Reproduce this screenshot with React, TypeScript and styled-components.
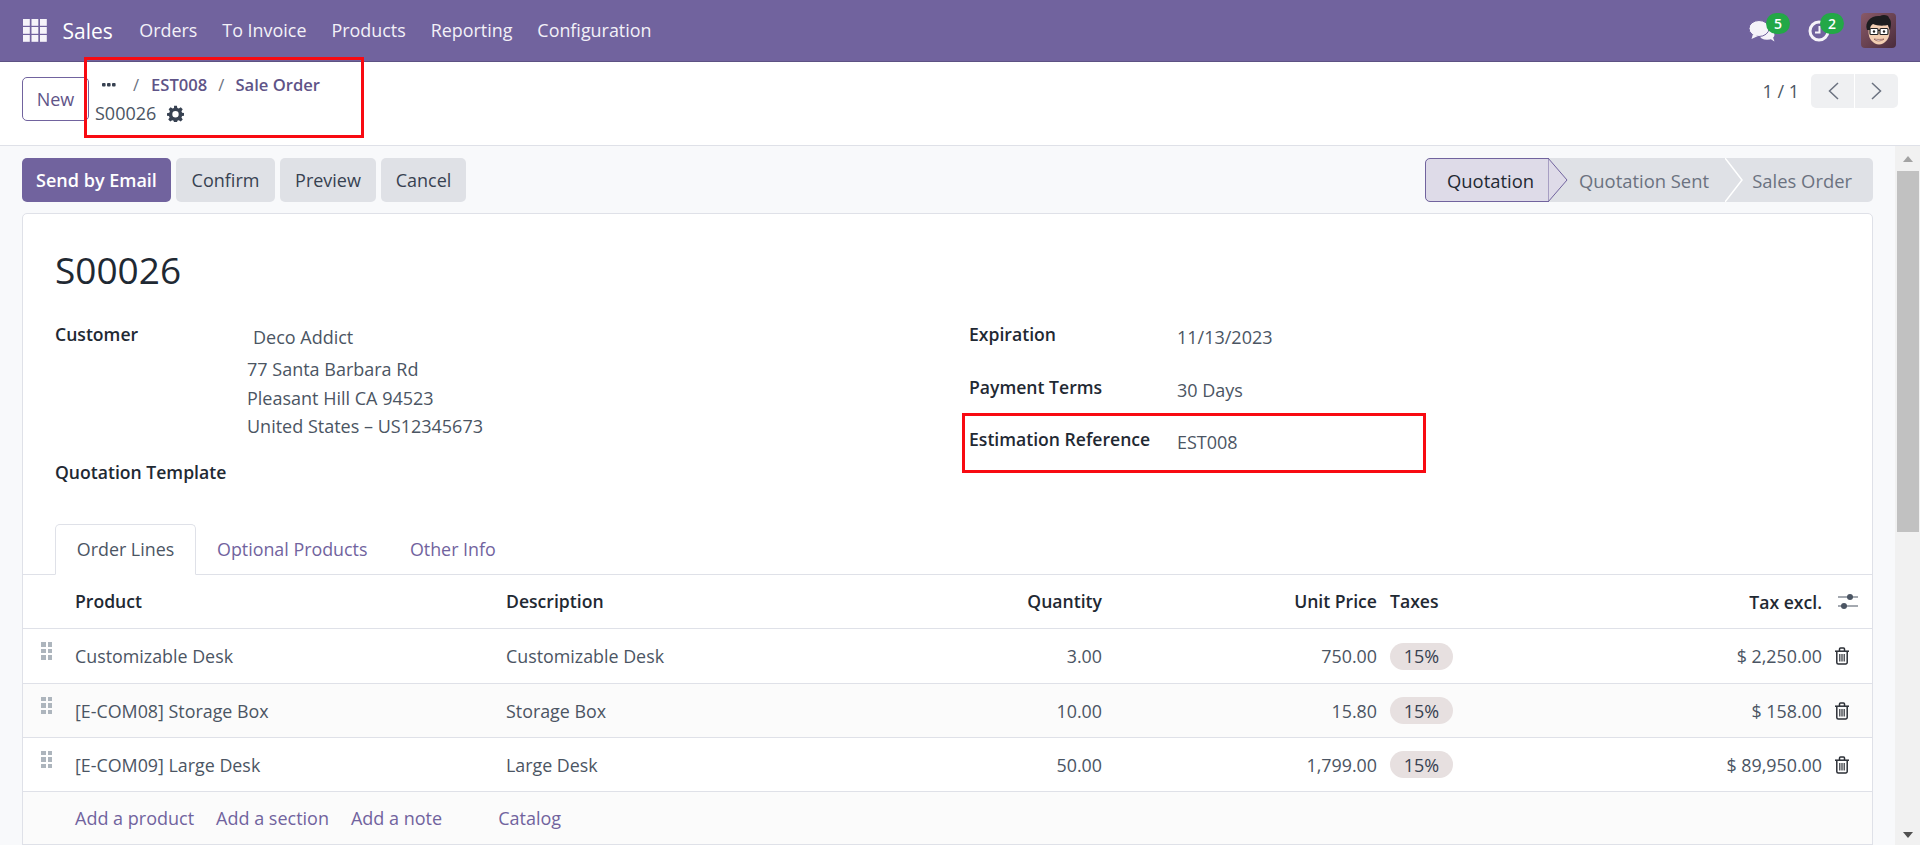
import React from "react";
import styled, { createGlobalStyle } from "styled-components";

const PURPLE = "#71639e";
const CRUMB = "#5f5488";
const INK = "#374151";
const FONT = `"Open Sans", "Noto Sans", "Liberation Sans", sans-serif`;

const Global = createGlobalStyle`
  html, body { margin: 0; padding: 0; height: 100%; overflow: hidden; background: #fff; }
  #root { height: 100%; }
  * { box-sizing: border-box; }
  body { font-family: ${FONT}; font-size: 18px; color: ${INK}; }
`;

const Page = styled.div`
  position: relative;
  width: 1920px;
  height: 845px;
  display: flex;
  flex-direction: column;
  overflow: hidden;
`;

const NavBar = styled.header`
  flex: 0 0 62px;
  display: flex;
  align-items: center;
  background: ${PURPLE};
  border-bottom: 1px solid #5d5283;
  padding: 0 24px 0 23px;
  color: #fff;
`;

const Brand = styled.span`
  font-size: 21px;
  margin-left: 15.5px;
  margin-right: 26.5px;
`;

const MenuItem = styled.span`
  font-size: 17.9px;
  color: #f3f1f8;
  margin-right: 25px;
  margin-top: -1px;
`;

const NavRight = styled.div`
  margin-left: auto;
  display: flex;
  align-items: center;
`;

const IconWithBadge = styled.span<{ $gap: number }>`
  position: relative;
  display: inline-flex;
  width: 26px;
  height: 22px;
  margin-right: ${(p) => p.$gap}px;
`;

const NavBadge = styled.span<{ $left: number }>`
  position: absolute;
  top: -7px;
  left: ${(p) => p.$left}px;
  width: 24px;
  height: 21px;
  border-radius: 11px;
  background: #23a847;
  color: #fff;
  font-size: 14px;
  font-weight: 600;
  display: flex;
  align-items: center;
  justify-content: center;
`;

const ControlPanel = styled.div`
  flex: 0 0 84px;
  display: flex;
  background: #fff;
  border-bottom: 1px solid #dfe1e8;
  padding: 15px 22px 0 22px;
`;

const NewButton = styled.button`
  width: 67px;
  height: 44px;
  background: #fff;
  border: 1px solid ${PURPLE};
  border-radius: 5px;
  color: ${CRUMB};
  font: 500 18px ${FONT};
  padding: 0;
`;

const Crumbs = styled.div`
  margin-left: 6px;
  display: flex;
  flex-direction: column;
`;

const CrumbRow = styled.div`
  display: flex;
  align-items: center;
  height: 29px;
  margin-top: -7px;
  font-size: 16.6px;
  font-weight: 600;
  color: ${CRUMB};
`;

const Dots = styled.span`
  margin-left: 7px;
  width: 14px;
  display: inline-flex;
`;

const Slash = styled.span<{ $left: number; $right: number }>`
  color: #6b7280;
  font-weight: 400;
  margin: 0 ${(p) => p.$right}px 0 ${(p) => p.$left}px;
`;

const Current = styled.div`
  display: flex;
  align-items: center;
  height: 28px;
  font-size: 18px;
  color: #4b5563;
  gap: 11px;
`;

const Pager = styled.div`
  margin-left: auto;
  display: flex;
  align-items: flex-start;
  margin-top: -3px;
`;

const PagerText = styled.span`
  font-size: 18px;
  line-height: 34px;
  margin-right: 12px;
  color: #4b5563;
`;

const PagerButton = styled.span<{ $side: "l" | "r" }>`
  width: 43px;
  height: 34px;
  background: #eff0f2;
  display: flex;
  align-items: center;
  justify-content: center;
  border-radius: ${(p) => (p.$side === "l" ? "5px 0 0 5px" : "0 5px 5px 0")};
  margin-left: ${(p) => (p.$side === "r" ? "1px" : "0")};
`;

const Body = styled.div`
  flex: 1;
  min-height: 0;
  display: flex;
`;

const Content = styled.main`
  flex: 1;
  min-width: 0;
  background: #f8f9fb;
  padding: 12px 22px 0 22px;
  overflow: hidden;
`;

const ActionBar = styled.div`
  display: flex;
  align-items: stretch;
  height: 44px;
`;

const ActionButton = styled.button<{ $primary?: boolean; $w: number }>`
  width: ${(p) => p.$w}px;
  border: none;
  border-radius: 5px;
  padding: 0;
  margin-right: 5px;
  background: ${(p) => (p.$primary ? PURPLE : "#dfe1e6")};
  color: ${(p) => (p.$primary ? "#fff" : INK)};
  font: ${(p) => (p.$primary ? 600 : 500)} 18px ${FONT};
`;

const StatusBar = styled.div`
  margin-left: auto;
  width: 448px;
  display: flex;
  position: relative;
  background: #dfe1e6;
  border-radius: 5px;
`;

const StatusCurrent = styled.div`
  width: 124px;
  background: #dedbe8;
  border: 1px solid ${PURPLE};
  border-radius: 5px 0 0 5px;
  color: #1f2933;
  font-weight: 500;
  font-size: 18.4px;
  display: flex;
  align-items: center;
  justify-content: flex-end;
  padding-right: 14px;
`;

const StatusStep = styled.div<{ $w: number }>`
  width: ${(p) => p.$w}px;
  color: #6b7280;
  font-weight: 500;
  font-size: 18.4px;
  display: flex;
  align-items: center;
  justify-content: flex-end;
`;

const StatusArrow = styled.svg<{ $x: number }>`
  position: absolute;
  left: ${(p) => p.$x}px;
  top: 0;
  width: 20px;
  height: 44px;
`;

const Sheet = styled.section`
  margin-top: 11px;
  background: #fff;
  border: 1px solid #dfe1e8;
  border-radius: 5px;
  height: 661px;
`;

const Title = styled.h1`
  margin: 0;
  padding: 31px 0 0 32px;
  height: 108px;
  font-size: 37px;
  line-height: 50px;
  font-weight: 500;
  color: #1f2933;
`;

const Columns = styled.div`
  display: grid;
  grid-template-columns: 914px 1fr;
  height: 202px;
`;

const FormColumn = styled.div`
  display: flex;
  flex-direction: column;
`;

const Field = styled.div<{ $h: number }>`
  display: flex;
  height: ${(p) => p.$h}px;
  padding-left: 32px;
`;

const Label = styled.span`
  width: 208px;
  flex: none;
  font-weight: 600;
  color: #1f2933;
  font-size: 17.6px;
  line-height: 24px;
`;

const Value = styled.span`
  color: #4b5563;
  font-size: 18px;
  line-height: 24px;
  padding-top: 3px;
`;

const Address = styled.div`
  color: #4b5563;
  font-size: 18px;
  line-height: 28.8px;
  margin-left: -16px;
  margin-top: 1px;
`;

const AddressName = styled.div`
  padding-left: 6px;
  margin-bottom: 3px;
`;

const Tabs = styled.nav`
  display: flex;
  height: 51px;
  padding-left: 32px;
  border-bottom: 1px solid #dfe1e8;
`;

const Tab = styled.span<{ $active?: boolean }>`
  width: ${(p) => (p.$active ? "141px" : "auto")};
  height: 51px;
  display: flex;
  align-items: center;
  justify-content: center;
  padding: ${(p) => (p.$active ? "0 0 2px" : "0 21.5px 2px 21px")};
  font-size: 17.85px;
  color: ${(p) => (p.$active ? "#4b5563" : PURPLE)};
  background: ${(p) => (p.$active ? "#fff" : "transparent")};
  border: ${(p) => (p.$active ? "1px solid #dfe1e8" : "none")};
  border-bottom: ${(p) => (p.$active ? "1px solid #fff" : "none")};
  border-radius: 5px 5px 0 0;
`;

const Row = styled.div<{ $h: number; $shade?: boolean }>`
  display: grid;
  grid-template-columns: 52px 431px 400px 196px 275px 13px 1fr;
  align-items: center;
  height: ${(p) => p.$h}px;
  background: ${(p) => (p.$shade ? "#fbfbfb" : "#fff")};
  border-bottom: 1px solid #dfe1e8;
  font-size: 17.85px;
  color: #4b5563;
`;

const HeadCell = styled.span<{ $right?: boolean }>`
  font-weight: 600;
  font-size: 17.6px;
  color: #1f2933;
  white-space: nowrap;
  padding-bottom: 2px;
  text-align: ${(p) => (p.$right ? "right" : "left")};
`;

const Cell = styled.span<{ $right?: boolean }>`
  text-align: ${(p) => (p.$right ? "right" : "left")};
  white-space: nowrap;
`;

const Handle = styled.span`
  display: grid;
  grid-template-columns: 4.5px 4.5px;
  grid-auto-rows: 4.5px;
  gap: 2px;
  justify-content: center;
  margin-left: -5px;
  margin-top: -10px;
  & > i { background: #adb5bd; display: block; }
`;

const TaxBadge = styled.span`
  display: inline-flex;
  align-items: center;
  justify-content: center;
  width: 63px;
  height: 27px;
  border-radius: 14px;
  background: #e7e0e0;
  color: #374151;
  font-size: 18px;
`;

const LastCell = styled.div`
  display: flex;
  align-items: center;
`;

const Amount = styled.span`
  margin-left: auto;
  white-space: nowrap;
`;

const IconSlot = styled.span<{ $pad: number }>`
  width: 50px;
  padding-right: ${(p) => p.$pad}px;
  display: flex;
  justify-content: flex-end;
`;

const AddLine = styled.span`
  grid-column: 1 / -1;
  display: flex;
  padding-left: 52px;
  color: ${PURPLE};
  font-size: 18px;
  white-space: nowrap;
`;

const AddLink = styled.span<{ $gap: number }>`
  margin-right: ${(p) => p.$gap}px;
`;

const ScrollTrack = styled.aside`
  flex: 0 0 25px;
  background: #f1f1f1;
  display: flex;
  flex-direction: column;
  align-items: center;
  justify-content: space-between;
  padding: 10px 0 7px;
  position: relative;
`;

const ScrollThumb = styled.div`
  position: absolute;
  left: 2px;
  right: 1px;
  top: 25px;
  height: 361px;
  background: #c1c1c1;
`;

const Caret = styled.span<{ $up?: boolean }>`
  width: 0;
  height: 0;
  border-left: 5px solid transparent;
  border-right: 5px solid transparent;
  ${(p) => (p.$up ? "border-bottom: 6px solid #a3a3a3;" : "border-top: 6px solid #505050;")}
`;

const Annotation = styled.div<{ $x: number; $y: number; $w: number; $h: number }>`
  position: absolute;
  left: ${(p) => p.$x}px;
  top: ${(p) => p.$y}px;
  width: ${(p) => p.$w}px;
  height: ${(p) => p.$h}px;
  border: 3px solid #f80a12;
  pointer-events: none;
`;

const GridIcon = () => (
  <svg width="24" height="23" viewBox="0 0 24 23" fill="#f5f3f9">
    {[0, 8.5, 17].map((x) =>
      [0, 8, 16].map((y) => <rect key={`${x}-${y}`} x={x} y={y} width="6.8" height="6.8" />)
    )}
  </svg>
);

const ChatIcon = () => (
  <svg width="26" height="22" viewBox="0 0 26 22" fill="#f5f3f9">
    <ellipse cx="18" cy="15" rx="7.5" ry="4.8" />
    <path d="M20 18 L25.500 21.500 L23.500 16z" />
    <ellipse cx="10" cy="8.500" rx="10" ry="8" stroke="#71639e" strokeWidth="1" />
    <path d="M4 14 L2.500 19 L9 16z" />
  </svg>
);

const ClockIcon = () => (
  <svg width="26" height="22" viewBox="0 0 26 22" fill="none" stroke="#f5f3f9">
    <circle cx="12" cy="11" r="9" strokeWidth="3" />
    <path d="M12.500 6v6.500H8" strokeWidth="2" />
  </svg>
);

const Avatar = () => (
  <svg width="35" height="35" viewBox="0 0 35 35">
    <defs>
      <linearGradient id="avbg" x1="0" y1="0" x2="1" y2="1">
        <stop offset="0" stopColor="#8a5a68" />
        <stop offset="1" stopColor="#4a2c3c" />
      </linearGradient>
    </defs>
    <rect width="35" height="35" rx="4" fill="url(#avbg)" />
    <ellipse cx="18" cy="19" rx="10.500" ry="12.500" fill="#f3cfb3" />
    <path d="M6 17C3 8 11 2 19 3c3-2 9-1 9 2 3 3 2 8 1 12l-2-5c-4 1-11 1-15-1-2 1-3 3-3 6z" fill="#1d1d1f" />
    <rect x="9" y="15.500" width="8" height="6" rx="1" fill="#fff" stroke="#222" strokeWidth="1.200" />
    <rect x="19" y="15.500" width="8" height="6" rx="1" fill="#fff" stroke="#222" strokeWidth="1.200" />
    <path d="M17 17.500h2" stroke="#222" strokeWidth="1" />
    <circle cx="13" cy="18.500" r="1.200" fill="#222" />
    <circle cx="23" cy="18.500" r="1.200" fill="#222" />
    <path d="M13 26c2 2.500 7 2.500 10 0-2 .6-7 .6-10 0z" fill="#fff" stroke="#7a3b30" strokeWidth=".6" />
  </svg>
);

const Gear = () => (
  <svg width="17" height="17" viewBox="0 0 24 24">
    <path
      fill="#374151"
      fillRule="evenodd"
      d="M10 1h4l.6 3.200 2.100.9 2.700-1.800 2.800 2.800-1.800 2.700.9 2.100 3.200.6v3.500l-3.200.6-.9 2.100 1.800 2.700-2.800 2.800-2.700-1.800-2.100.9-.6 3.200h-4l-.6-3.200-2.100-.9-2.700 1.800-2.800-2.800 1.800-2.700-.9-2.100L0 15v-3.500l3.200-.6.9-2.100-1.800-2.700 2.800-2.800 2.700 1.800 2.100-.9zM12 8.500a4.500 4.500 0 1 0 0 9 4.500 4.500 0 0 0 0-9z"
    />
  </svg>
);

const Chevron = ({ left }: { left?: boolean }) => (
  <svg width="12" height="18" viewBox="0 0 12 18" fill="none" stroke="#6b7280" strokeWidth="1.500">
    <path d={left ? "M11 1 2.500 9l8.500 8" : "M1 1l8.500 8L1 17"} />
  </svg>
);

const Sliders = () => (
  <svg width="20" height="17" viewBox="0 0 20 17" fill="#4b5563" stroke="#4b5563">
    <path d="M0 4h20M0 13h20" strokeWidth="1.200" />
    <circle cx="12" cy="4" r="3" stroke="none" />
    <circle cx="6" cy="13" r="3" stroke="none" />
  </svg>
);

const Trash = () => (
  <svg width="16" height="18" viewBox="0 0 16 18" fill="none" stroke="#2b2f36" strokeWidth="1.500">
    <path d="M1 4.200h14" />
    <path d="M5.500 4V2a1 1 0 0 1 1-1h3a1 1 0 0 1 1 1v2" />
    <path d="M2.800 4.500v11a1.500 1.500 0 0 0 1.500 1.500h7.400a1.500 1.500 0 0 0 1.500-1.500v-11" />
    <path d="M5.800 7v7.500M8 7v7.500M10.200 7v7.500" strokeWidth="1.200" />
  </svg>
);

const DotsIcon = () => (
  <svg width="14" height="6" viewBox="0 0 14 6" fill="#374151">
    <rect x="0" y="1" width="3.600" height="3.600" rx="1" />
    <rect x="5" y="1" width="3.600" height="3.600" rx="1" />
    <rect x="10" y="1" width="3.600" height="3.600" rx="1" />
  </svg>
);

const lines = [
  { p: "Customizable Desk", d: "Customizable Desk", q: "3.00", u: "750.00", t: "$ 2,250.00", h: 55 },
  { p: "[E-COM08] Storage Box", d: "Storage Box", q: "10.00", u: "15.80", t: "$ 158.00", h: 54 },
  { p: "[E-COM09] Large Desk", d: "Large Desk", q: "50.00", u: "1,799.00", t: "$ 89,950.00", h: 54 },
];

export default function App() {
  return (
    <Page>
      <Global />
      <NavBar>
        <GridIcon />
        <Brand>Sales</Brand>
        <MenuItem>Orders</MenuItem>
        <MenuItem>To Invoice</MenuItem>
        <MenuItem>Products</MenuItem>
        <MenuItem>Reporting</MenuItem>
        <MenuItem>Configuration</MenuItem>
        <NavRight>
          <IconWithBadge $gap={32}>
            <ChatIcon />
            <NavBadge $left={17}>5</NavBadge>
          </IconWithBadge>
          <IconWithBadge $gap={28}>
            <ClockIcon />
            <NavBadge $left={13}>2</NavBadge>
          </IconWithBadge>
          <Avatar />
        </NavRight>
      </NavBar>
      <ControlPanel>
        <NewButton>New</NewButton>
        <Crumbs>
          <CrumbRow>
            <Dots>
              <DotsIcon />
            </Dots>
            <Slash $left={17} $right={12}>/</Slash>
            <span>EST008</span>
            <Slash $left={11} $right={11}>/</Slash>
            <span>Sale Order</span>
          </CrumbRow>
          <Current>
            S00026
            <Gear />
          </Current>
        </Crumbs>
        <Pager>
          <PagerText>1 / 1</PagerText>
          <PagerButton $side="l">
            <Chevron left />
          </PagerButton>
          <PagerButton $side="r">
            <Chevron />
          </PagerButton>
        </Pager>
      </ControlPanel>
      <Body>
        <Content>
          <ActionBar>
            <ActionButton $primary $w={149}>Send by Email</ActionButton>
            <ActionButton $w={99}>Confirm</ActionButton>
            <ActionButton $w={96}>Preview</ActionButton>
            <ActionButton $w={85}>Cancel</ActionButton>
            <StatusBar>
              <StatusCurrent>Quotation</StatusCurrent>
              <StatusStep $w={160}>Quotation Sent</StatusStep>
              <StatusStep $w={143}>Sales Order</StatusStep>
              <StatusArrow $x={123} viewBox="0 0 20 44">
                <path d="M0 0 L19 22 L0 44z" fill="#dedbe8" stroke="#71639e" strokeWidth="1" />
              </StatusArrow>
              <StatusArrow $x={300} viewBox="0 0 20 44">
                <path d="M0 0 L17 22 L0 44" fill="none" stroke="#fff" strokeWidth="1.500" />
              </StatusArrow>
            </StatusBar>
          </ActionBar>
          <Sheet>
            <Title>S00026</Title>
            <Columns>
              <FormColumn>
                <Field $h={138}>
                  <Label>Customer</Label>
                  <Address>
                    <AddressName>Deco Addict</AddressName>
                    <div>77 Santa Barbara Rd</div>
                    <div>Pleasant Hill CA 94523</div>
                    <div>United States – US12345673</div>
                  </Address>
                </Field>
                <Field $h={40}>
                  <Label>Quotation Template</Label>
                </Field>
              </FormColumn>
              <FormColumn>
                <Field $h={53}>
                  <Label>Expiration</Label>
                  <Value>11/13/2023</Value>
                </Field>
                <Field $h={52}>
                  <Label>Payment Terms</Label>
                  <Value>30 Days</Value>
                </Field>
                <Field $h={40}>
                  <Label>Estimation Reference</Label>
                  <Value>EST008</Value>
                </Field>
              </FormColumn>
            </Columns>
            <Tabs>
              <Tab $active>Order Lines</Tab>
              <Tab>Optional Products</Tab>
              <Tab>Other Info</Tab>
            </Tabs>
            <Row $h={54}>
              <span />
              <HeadCell>Product</HeadCell>
              <HeadCell>Description</HeadCell>
              <HeadCell $right>Quantity</HeadCell>
              <HeadCell $right>Unit Price</HeadCell>
              <span />
              <LastCell>
                <HeadCell>Taxes</HeadCell>
                <Amount>
                  <HeadCell>Tax excl.</HeadCell>
                </Amount>
                <IconSlot $pad={14}>
                  <Sliders />
                </IconSlot>
              </LastCell>
            </Row>
            {lines.map((l, i) => (
              <Row key={l.p} $h={l.h} $shade={i === 1}>
                <Handle>
                  <i /><i /><i /><i /><i /><i />
                </Handle>
                <Cell>{l.p}</Cell>
                <Cell>{l.d}</Cell>
                <Cell $right>{l.q}</Cell>
                <Cell $right>{l.u}</Cell>
                <span />
                <LastCell>
                  <TaxBadge>15%</TaxBadge>
                  <Amount>{l.t}</Amount>
                  <IconSlot $pad={22}>
                    <Trash />
                  </IconSlot>
                </LastCell>
              </Row>
            ))}
            <Row $h={53} $shade>
              <AddLine>
                <AddLink $gap={22}>Add a product</AddLink>
                <AddLink $gap={22}>Add a section</AddLink>
                <AddLink $gap={56}>Add a note</AddLink>
                <span>Catalog</span>
              </AddLine>
            </Row>
          </Sheet>
        </Content>
        <ScrollTrack>
          <Caret $up />
          <ScrollThumb />
          <Caret />
        </ScrollTrack>
      </Body>
      <Annotation $x={84} $y={57} $w={280} $h={81} />
      <Annotation $x={962} $y={413} $w={464} $h={60} />
    </Page>
  );
}
